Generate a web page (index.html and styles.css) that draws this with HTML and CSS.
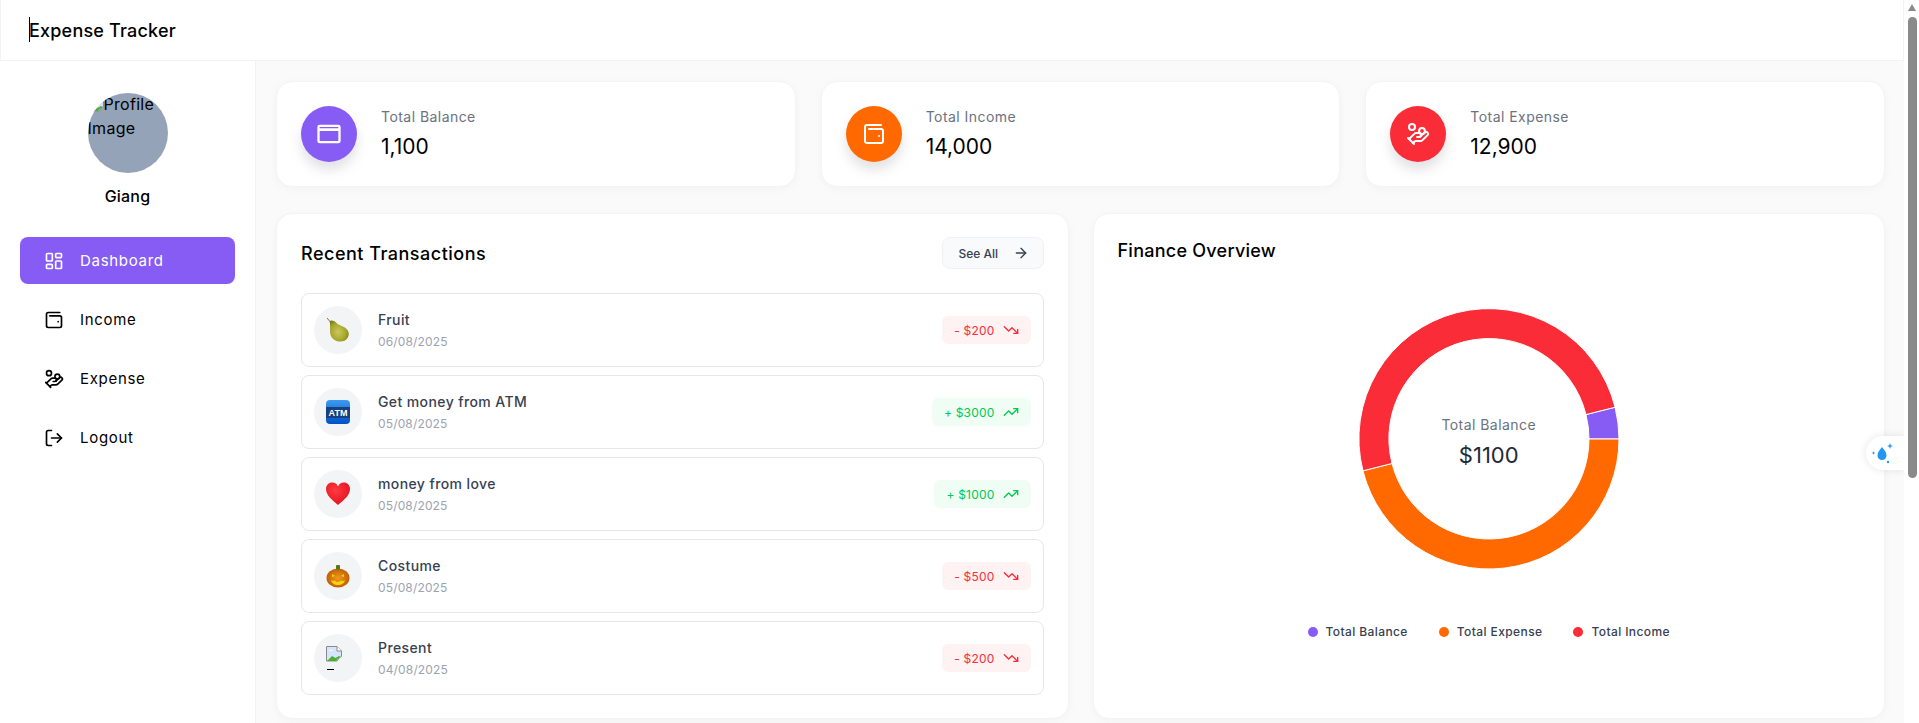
FILE: index.html
```html
<!DOCTYPE html>
<html lang="en">
<head>
    <meta charset="UTF-8">
    <meta name="viewport" content="width=device-width, initial-scale=1.0">
    <title>Expense Tracker</title>
    <link rel="stylesheet" href="styles.css">
</head>
<body>
    <svg class="icon-defs" width="0" height="0">
        <defs>
            <radialGradient id="pear-fill" cx="0.45" cy="0.55" r="0.6">
                <stop offset="0" stop-color="#c9c95a"/>
                <stop offset="0.7" stop-color="#a5a52c"/>
                <stop offset="1" stop-color="#7c7f18"/>
            </radialGradient>
            <linearGradient id="atm-fill" x1="0" y1="0" x2="0" y2="1">
                <stop offset="0" stop-color="#3d9bf0"/>
                <stop offset="1" stop-color="#0050c8"/>
            </linearGradient>
            <radialGradient id="heart-fill" cx="0.4" cy="0.35" r="0.75">
                <stop offset="0" stop-color="#ff3a40"/>
                <stop offset="1" stop-color="#e00f1c"/>
            </radialGradient>
            <radialGradient id="pumpkin-fill" cx="0.5" cy="0.5" r="0.6">
                <stop offset="0" stop-color="#f09a18"/>
                <stop offset="1" stop-color="#b85404"/>
            </radialGradient>
            <g id="i-dashboard"><rect x="3" y="3" width="7" height="9" rx="1"/><rect x="14" y="3" width="7" height="5" rx="1"/><rect x="14" y="12" width="7" height="9" rx="1"/><rect x="3" y="16" width="7" height="5" rx="1"/></g>
            <g id="i-wallet"><path d="M17 14h.01"/><path d="M7 7h12a2 2 0 0 1 2 2v10a2 2 0 0 1-2 2H5a2 2 0 0 1-2-2V5a2 2 0 0 1 2-2h14"/></g>
            <g id="i-coins"><path d="M11 15h2a2 2 0 1 0 0-4h-3c-.6 0-1.1.2-1.4.6L3 17"/><path d="m7 21 1.6-1.4c.3-.4.8-.6 1.4-.6h4c1.1 0 2.1-.4 2.8-1.2l4.6-4.4a2 2 0 0 0-2.75-2.91l-4.2 3.9"/><path d="m2 16 6 6"/><circle cx="16" cy="9" r="2.9"/><circle cx="6" cy="5" r="3"/></g>
            <g id="i-logout"><path d="M9 21H5a2 2 0 0 1-2-2V5a2 2 0 0 1 2-2h4"/><polyline points="16 17 21 12 16 7"/><line x1="21" y1="12" x2="9" y2="12"/></g>
            <g id="i-down"><polyline points="22 17 13.5 8.5 8.5 13.5 2 7"/><polyline points="16 17 22 17 22 11"/></g>
            <g id="i-up"><polyline points="22 7 13.5 15.5 8.5 10.5 2 17"/><polyline points="16 7 22 7 22 13"/></g>
            <g id="i-broken">
                <path d="M.5.500h10.500l4.500 4.500v5.500l-2.500 1.500-2 3H.5z" fill="#d6e6fa" stroke="#8a8a8a"/>
                <path d="M11 .5v4.500h4.500" fill="#fff" stroke="#8a8a8a"/>
                <path d="M1 15l5-5 3.500 2 3.500-2 1.500 1-2.500 1.500-2 2.500z" fill="#4caf35"/>
                <path d="M3 5c1-1.500 3-1.500 4 0z" fill="#fff"/>
            </g>
        </defs>
    </svg>

    <header class="topbar">
        <span class="caret"></span>
        <h1 class="brand">Expense Tracker</h1>
    </header>

    <div class="layout">
        <aside class="sidebar">
            <div class="avatar">
                <div class="avatar-alt"><svg class="broken-img" viewBox="0 0 16 16"><use href="#i-broken"/></svg>Profile Image</div>
            </div>
            <div class="user-name">Giang</div>
            <nav class="menu">
                <a class="menu-item active"><svg class="line-icon" viewBox="0 0 24 24"><use href="#i-dashboard"/></svg>Dashboard</a>
                <a class="menu-item"><svg class="line-icon" viewBox="0 0 24 24"><use href="#i-wallet"/></svg>Income</a>
                <a class="menu-item"><svg class="line-icon" viewBox="0 0 24 24"><use href="#i-coins"/></svg>Expense</a>
                <a class="menu-item"><svg class="line-icon" viewBox="0 0 24 24"><use href="#i-logout"/></svg>Logout</a>
            </nav>
        </aside>

        <main class="content">
            <section class="stats">
                <div class="card stat">
                    <div class="stat-icon purple">
                        <svg class="card-svg" viewBox="0 0 24 24"><path fill="#fff" fill-rule="evenodd" d="M4 4h16a2 2 0 0 1 2 2v12a2 2 0 0 1-2 2H4a2 2 0 0 1-2-2V6a2 2 0 0 1 2-2zm0 2v1h16V6zm0 3.500V18h16V9.500z"/></svg>
                    </div>
                    <div class="stat-text">
                        <div class="stat-label">Total Balance</div>
                        <div class="stat-value">1,100</div>
                    </div>
                </div>
                <div class="card stat">
                    <div class="stat-icon orange">
                        <svg class="stat-svg line-icon" viewBox="0 0 24 24"><use href="#i-wallet"/></svg>
                    </div>
                    <div class="stat-text">
                        <div class="stat-label">Total Income</div>
                        <div class="stat-value">14,000</div>
                    </div>
                </div>
                <div class="card stat">
                    <div class="stat-icon red">
                        <svg class="stat-svg line-icon" viewBox="0 0 24 24"><use href="#i-coins"/></svg>
                    </div>
                    <div class="stat-text">
                        <div class="stat-label">Total Expense</div>
                        <div class="stat-value">12,900</div>
                    </div>
                </div>
            </section>

            <section class="panels">
                <div class="card panel">
                    <div class="panel-head">
                        <h2 class="panel-title recent-title">Recent Transactions</h2>
                        <button class="see-all">See All
                            <svg class="line-icon arrow" viewBox="0 0 24 24"><path d="M5 12h14"/><path d="m12 5 7 7-7 7"/></svg>
                        </button>
                    </div>
                    <ul class="tx-list">
                        <li class="tx">
                            <div class="tx-icon">
                                <svg class="emoji" viewBox="0 0 24 24">
                                    <path d="M1 0l3 3.500" stroke="#9a6b3a" stroke-width="1" fill="none"/>
                                    <path d="M3.500 3C6 1.500 9 3 11 5.500 13 7.500 18 8 21 11.500 24 15 23 20 19 22.500 14 25 7 23 5 18 3 13.500 5 8 3.500 3z" fill="url(#pear-fill)"/>
                                </svg>
                            </div>
                            <div class="tx-info"><div class="tx-name">Fruit</div><div class="tx-date">06/08/2025</div></div>
                            <div class="amount minus">- $200<svg class="line-icon trend" viewBox="0 0 24 24"><use href="#i-down"/></svg></div>
                        </li>
                        <li class="tx">
                            <div class="tx-icon">
                                <svg class="emoji" viewBox="0 0 24 24">
                                    <rect width="24" height="24" rx="4" fill="url(#atm-fill)"/>
                                    <rect y="7" width="24" height="11" fill="#16407e"/>
                                    <text class="atm-text" x="12" y="16" text-anchor="middle">ATM</text>
                                </svg>
                            </div>
                            <div class="tx-info"><div class="tx-name">Get money from ATM</div><div class="tx-date">05/08/2025</div></div>
                            <div class="amount plus">+ $3000<svg class="line-icon trend" viewBox="0 0 24 24"><use href="#i-up"/></svg></div>
                        </li>
                        <li class="tx">
                            <div class="tx-icon">
                                <svg class="emoji" viewBox="0 0 24 24">
                                    <path d="M12 23C6 18 0 13 0 7c0-4 3-6.500 6-6.500 3 0 5 1.500 6 4 1-2.500 3-4 6-4 3 0 6 2.500 6 6.500 0 6-6 11-12 16z" fill="url(#heart-fill)"/>
                                </svg>
                            </div>
                            <div class="tx-info"><div class="tx-name">money from love</div><div class="tx-date">05/08/2025</div></div>
                            <div class="amount plus">+ $1000<svg class="line-icon trend" viewBox="0 0 24 24"><use href="#i-up"/></svg></div>
                        </li>
                        <li class="tx">
                            <div class="tx-icon">
                                <svg class="emoji" viewBox="0 0 24 24">
                                    <ellipse cx="12" cy="14" rx="11.500" ry="9.500" fill="url(#pumpkin-fill)"/>
                                    <rect x="10" y="1" width="4" height="4.500" rx="1" fill="#4f7a1c"/>
                                    <path d="M6 10l3 2-3 1zM18 10l-3 2 3 1zM5 16c2 1 3 1 4 .5l1.500 1.500 3-.5 1.500-1c1 .5 3 .5 4-.5-1 4-4 5-7 5s-6-1-7-5z" fill="#f5d312"/>
                                </svg>
                            </div>
                            <div class="tx-info"><div class="tx-name">Costume</div><div class="tx-date">05/08/2025</div></div>
                            <div class="amount minus">- $500<svg class="line-icon trend" viewBox="0 0 24 24"><use href="#i-down"/></svg></div>
                        </li>
                        <li class="tx">
                            <div class="tx-icon">
                                <div class="broken-box">
                                    <svg class="broken-tx" viewBox="0 0 16 16"><use href="#i-broken"/></svg>
                                    <span class="broken-alt"></span>
                                </div>
                            </div>
                            <div class="tx-info"><div class="tx-name">Present</div><div class="tx-date">04/08/2025</div></div>
                            <div class="amount minus">- $200<svg class="line-icon trend" viewBox="0 0 24 24"><use href="#i-down"/></svg></div>
                        </li>
                    </ul>
                </div>

                <div class="card panel">
                    <h2 class="panel-title overview-title">Finance Overview</h2>
                    <div class="donut">
                        <svg class="donut-svg" viewBox="0 0 260 260">
                            <path fill="#875cf5" stroke="#fff" d="M260 130A130 130 0 0 0 256.060 98.240L226.970 105.570A100 100 0 0 1 230 130Z"/>
                            <path fill="#ff6900" stroke="#fff" d="M260 130A130 130 0 0 1 3.950 161.800L33.040 154.460A100 100 0 0 0 230 130Z"/>
                            <path fill="#fa2c37" stroke="#fff" d="M3.950 161.800A130 130 0 1 1 256.060 98.240L226.970 105.570A100 100 0 1 0 33.040 154.460Z"/>
                        </svg>
                        <div class="donut-center">
                            <div class="donut-label">Total Balance</div>
                            <div class="donut-value">$1100</div>
                        </div>
                    </div>
                    <div class="legend">
                        <span class="legend-item"><i class="dot purple"></i>Total Balance</span>
                        <span class="legend-item"><i class="dot orange"></i>Total Expense</span>
                        <span class="legend-item"><i class="dot red"></i>Total Income</span>
                    </div>
                </div>
            </section>
        </main>
    </div>

    <div class="drop-widget">
        <svg class="drop-svg" viewBox="0 0 24 24" fill="#2196f3">
            <path d="M11 6c2 3 4.500 5 4.500 8.500a4.500 4.500 0 0 1-9 0C6.500 11 9 9 11 6z"/>
            <path d="M19 2l.8 2.200L22 5l-2.200.8L19 8l-.8-2.200L16 5l2.200-.8z"/>
            <path d="M2.500 10l.5 1.500 1.500.5-1.500.5-.5 1.500-.5-1.500-1.500-.5 1.500-.5z"/>
            <circle cx="17" cy="21" r="1.200"/>
        </svg>
    </div>

    <div class="scrollbar">
        <div class="scroll-arrow"></div>
        <div class="scroll-thumb"></div>
    </div>
</body>
</html>
```

FILE: styles.css
```css
* {
    box-sizing: border-box;
}

body {
    margin: 0;
    height: 723px;
    width: 1904px;
    overflow: hidden;
    font-family: Inter, "Open Sans", sans-serif;
    background-color: #fafafa;
    color: #000;
}

h1,
h2,
ul {
    margin: 0;
    padding: 0;
}

ul {
    list-style: none;
}

.icon-defs {
    position: absolute;
}

.line-icon {
    fill: none;
    stroke: currentColor;
    stroke-width: 2;
    stroke-linecap: round;
    stroke-linejoin: round;
}

/* top bar */
.topbar {
    height: 61px;
    display: flex;
    align-items: center;
    padding-left: 28px;
    background-color: #fff;
    border: 1px solid #f3f3f3;
    border-top: 0;
    position: relative;
}

.caret {
    position: absolute;
    left: 28px;
    top: 17px;
    width: 1px;
    height: 25px;
    background-color: #000;
}

.brand {
    font-size: 18px;
    font-weight: 500;
    letter-spacing: 0.2px;
}

.layout {
    display: flex;
}

/* sidebar */
.sidebar {
    width: 256px;
    height: 662px;
    flex-shrink: 0;
    padding: 32px 20px 0;
    background-color: #fff;
    border-right: 1px solid #f3f3f3;
}

.avatar {
    width: 80px;
    height: 80px;
    margin: 0 auto;
    border-radius: 50%;
    background-color: #94a3b8;
    overflow: hidden;
    font-size: 16px;
    line-height: 24px;
    letter-spacing: 0.3px;
}

.avatar-alt {
    margin-top: -1px;
}

.broken-img {
    width: 16px;
    height: 16px;
    vertical-align: -2px;
}

.user-name {
    margin-top: 11px;
    margin-bottom: 29px;
    text-align: center;
    font-size: 16px;
    font-weight: 500;
    line-height: 24px;
    letter-spacing: 0.2px;
}

.menu {
    display: flex;
    flex-direction: column;
    gap: 12px;
}

.menu-item {
    height: 47px;
    display: flex;
    align-items: center;
    gap: 16px;
    padding-left: 24px;
    border-radius: 8px;
    font-size: 15px;
    letter-spacing: 0.7px;
}

.menu-item svg {
    width: 20px;
    height: 20px;
}

.menu-item.active {
    background-color: #875cf5;
    color: #fff;
}

/* main */
.content {
    flex: 1;
    padding: 20px 19px 0 20px;
}

.card {
    background-color: #fff;
    border: 1px solid #f3f4f6;
    border-radius: 16px;
    box-shadow: 0 2px 6px rgba(230, 232, 236, 0.35);
}

.stats {
    display: grid;
    grid-template-columns: repeat(3, 1fr);
    gap: 25px;
}

.stat {
    height: 106px;
    display: flex;
    align-items: center;
    gap: 24px;
    padding-left: 24px;
}

.stat-icon {
    width: 56px;
    height: 56px;
    border-radius: 50%;
    display: flex;
    align-items: center;
    justify-content: center;
    color: #fff;
    box-shadow: 0 8px 12px rgba(160, 160, 170, 0.3);
}

.stat-svg {
    width: 24px;
    height: 24px;
}

.card-svg {
    width: 28px;
    height: 28px;
}

.purple {
    background-color: #875cf5;
}

.orange {
    background-color: #ff6900;
}

.red {
    background-color: #fa2c37;
}

.stat-text {
    margin-top: 1px;
}

.stat-label {
    font-size: 14px;
    line-height: 20px;
    letter-spacing: 0.45px;
    color: #6b7280;
    margin-bottom: 4px;
}

.stat-value {
    font-size: 21px;
    line-height: 32px;
}

.panels {
    display: grid;
    grid-template-columns: repeat(2, 1fr);
    gap: 24px;
    margin-top: 26px;
}

.panel {
    height: 506px;
    padding: 23px 24px 0;
}

.panel-head {
    display: flex;
    align-items: center;
    justify-content: space-between;
    height: 32px;
}

.panel-title {
    font-size: 18px;
    font-weight: 500;
}

.recent-title {
    letter-spacing: 0.5px;
}

.see-all {
    width: 102px;
    height: 32px;
    display: flex;
    align-items: center;
    gap: 15px;
    padding: 0 0 0 16px;
    font-family: inherit;
    font-size: 12px;
    font-weight: 500;
    color: #374151;
    background-color: #f9fafb;
    border: 1px solid #f0f1f4;
    border-radius: 8px;
}

.arrow {
    width: 16px;
    height: 16px;
}

.tx-list {
    display: flex;
    flex-direction: column;
    gap: 8px;
    margin-top: 24px;
}

.tx {
    height: 74px;
    display: flex;
    align-items: center;
    gap: 16px;
    padding: 0 12px;
    border: 1px solid #e5e7eb;
    border-radius: 8px;
}

.tx-icon {
    width: 48px;
    height: 48px;
    flex-shrink: 0;
    display: flex;
    align-items: center;
    justify-content: center;
    border-radius: 50%;
    background-color: #f3f4f6;
}

.emoji {
    width: 24px;
    height: 24px;
}

.atm-text {
    font-family: "Liberation Sans", sans-serif;
    font-size: 9px;
    font-weight: 700;
    fill: #fff;
}

.broken-box {
    width: 24px;
    height: 24px;
    overflow: hidden;
}

.broken-tx {
    display: block;
    width: 16px;
    height: 16px;
}

.broken-alt {
    display: block;
    width: 7px;
    height: 1px;
    margin: 7px 0 0 1px;
    background-color: #000;
}

.tx-info {
    flex: 1;
}

.tx-name {
    font-size: 14px;
    font-weight: 500;
    line-height: 20px;
    letter-spacing: 0.4px;
    color: #374151;
}

.tx-date {
    font-size: 12px;
    line-height: 16px;
    letter-spacing: 0.15px;
    margin-top: 4px;
    color: #9ca3af;
}

.amount {
    height: 28px;
    display: flex;
    align-items: center;
    gap: 8px;
    padding: 0 12px;
    border-radius: 6px;
    font-size: 12px;
    letter-spacing: 0.2px;
}

.amount.minus {
    background-color: #fef2f2;
    color: #fa2c37;
}

.amount.plus {
    background-color: #f0fdf4;
    color: #00c950;
}

.trend {
    width: 16px;
    height: 16px;
}

/* finance overview */
.overview-title {
    line-height: 28px;
    letter-spacing: 0.25px;
}

.donut {
    position: relative;
    width: 260px;
    height: 260px;
    margin: 44px auto 0;
}

.donut-svg {
    display: block;
    width: 260px;
    height: 260px;
}

.donut-center {
    position: absolute;
    inset: 0;
    display: flex;
    flex-direction: column;
    align-items: center;
    justify-content: center;
    padding-top: 8px;
}

.donut-label {
    font-size: 14px;
    line-height: 20px;
    letter-spacing: 0.45px;
    color: #6b7280;
}

.donut-value {
    font-size: 22px;
    line-height: 32px;
    margin-top: 4px;
    color: #1f2937;
}

.legend {
    display: flex;
    justify-content: center;
    gap: 31px;
    margin-top: 55px;
}

.legend-item {
    display: flex;
    align-items: center;
    gap: 8px;
    font-size: 12px;
    font-weight: 500;
    letter-spacing: 0.4px;
    color: #374151;
}

.dot {
    width: 10px;
    height: 10px;
    border-radius: 50%;
}

/* things lying over the page */
.drop-widget {
    position: absolute;
    left: 1866px;
    top: 436px;
    width: 39px;
    height: 34px;
    padding: 5px 0 0 5px;
    background-color: #fff;
    border-radius: 17px 0 0 17px;
    box-shadow: 0 0 8px rgba(0, 0, 0, 0.1);
}

.drop-svg {
    display: block;
    width: 24px;
    height: 24px;
}

.scrollbar {
    position: absolute;
    left: 1904px;
    top: 0;
    width: 15px;
    height: 723px;
    background-color: #fff;
}

.scroll-arrow {
    width: 0;
    height: 0;
    margin: 4px 0 0 4px;
    border-left: 4.5px solid transparent;
    border-right: 4.5px solid transparent;
    border-bottom: 7px solid #8a8a8a;
}

.scroll-thumb {
    width: 9px;
    height: 461px;
    margin: 6px 0 0 4px;
    border-radius: 5px;
    background-color: #8a8a8a;
}
```
